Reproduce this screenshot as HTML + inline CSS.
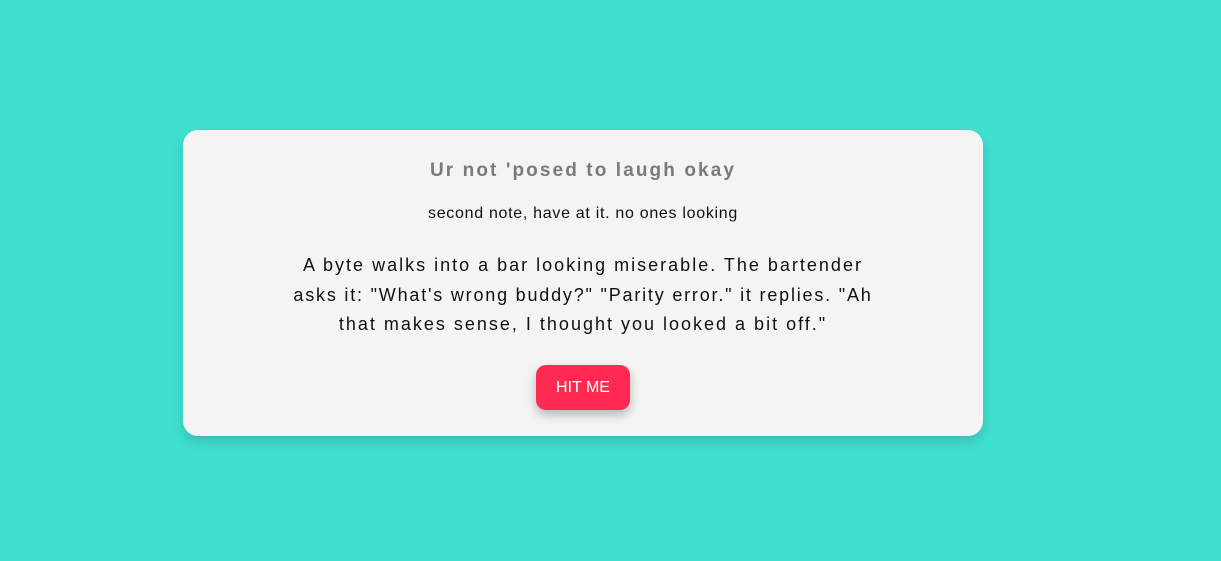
<!DOCTYPE html>
<html><head><meta charset="utf-8"><style>
html,body{margin:0;padding:0}
body{width:1221px;height:561px;background:#40e0d0;font-family:"Liberation Sans",sans-serif;position:relative;overflow:hidden}
.card{position:absolute;left:183px;top:130px;width:800px;height:306px;background:#f4f4f4;border-radius:15px;box-shadow:0 6px 12px rgba(0,0,0,0.15);text-align:center}
.t{position:absolute;top:30px;left:0;width:100%;text-align:center;font-size:19px;color:#7a7a7a;letter-spacing:2.1px;font-weight:bold}
.s{position:absolute;top:75px;left:0;width:100%;font-size:16px;color:#111;letter-spacing:0.7px}
.j{position:absolute;top:121px;left:0;width:100%;font-size:18px;line-height:29.5px;color:#111;letter-spacing:2px}
.j span{letter-spacing:1.8px}
.b{position:absolute;left:353px;top:235px;width:94px;height:45px;background:#fe2a52;border-radius:10px;color:#fff;font-size:16px;line-height:46px;box-shadow:0 5px 10px rgba(0,0,0,0.25)}
</style></head><body>
<div class="card">
<div class="t">Ur not 'posed to laugh okay</div>
<div class="s">second note, have at it. no ones looking</div>
<div class="j">A byte walks into a bar looking miserable. The bartender<br><span>asks it: "What's wrong buddy?" "Parity error." it replies. "Ah</span><br>that makes sense, I thought you looked a bit off."</div>
<div class="b">HIT ME</div>
</div>
</body></html>
